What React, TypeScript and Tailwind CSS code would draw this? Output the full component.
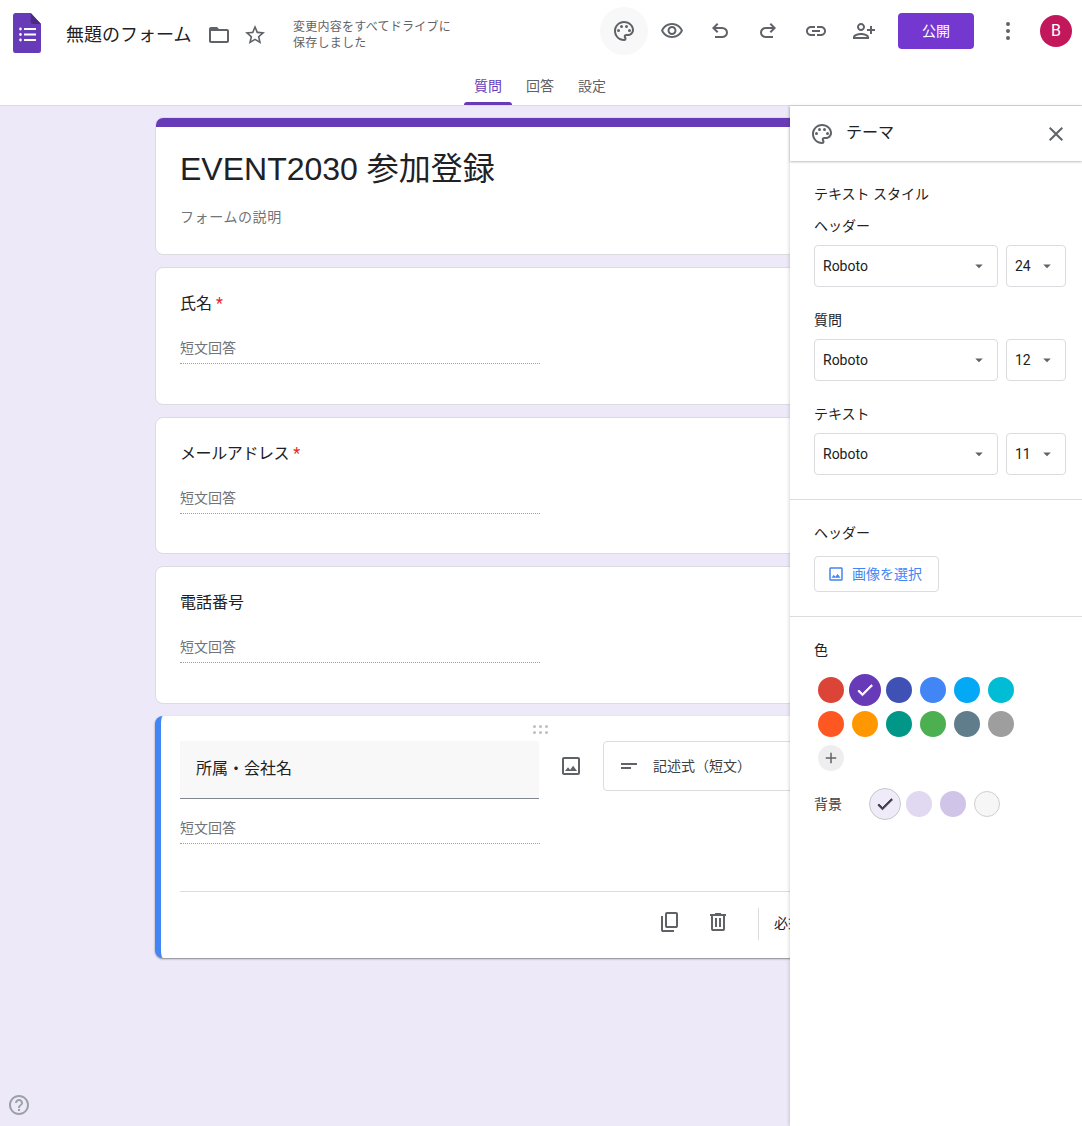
import type { ReactNode } from "react";

const PALETTE =
	"M12 22C6.49 22 2 17.51 2 12S6.49 2 12 2s10 4.04 10 9c0 3.31-2.69 6-6 6h-1.77c-.28 0-.5.22-.5.5 0 .12.05.23.13.33.41.47.64 1.06.64 1.67A2.5 2.5 0 0 1 12 22zm0-18c-4.41 0-8 3.59-8 8s3.59 8 8 8c.28 0 .5-.22.5-.5a.54.54 0 0 0-.14-.35c-.41-.46-.63-1.05-.63-1.65a2.5 2.5 0 0 1 2.5-2.5H16c2.21 0 4-1.79 4-4 0-3.86-3.59-7-8-7z";
const IMAGE =
	"M19 5v14H5V5h14m0-2H5c-1.1 0-2 .9-2 2v14c0 1.1.9 2 2 2h14c1.1 0 2-.9 2-2V5c0-1.1-.9-2-2-2zm-4.86 8.86l-3 3.87L9 13.14 6 17h12l-3.86-5.14z";

function Icon({ d, className = "", children }: { d?: string; className?: string; children?: ReactNode }) {
	return (
		<svg viewBox="0 0 24 24" className={"fill-current " + className}>
			{d && <path d={d} />}
			{children}
		</svg>
	);
}

function SymbolIcon({ d, className = "" }: { d: string; className?: string }) {
	return (
		<svg viewBox="0 -960 960 960" className={"fill-current " + className}>
			<path d={d} />
		</svg>
	);
}

function PaletteIcon({ className = "" }: { className?: string }) {
	return (
		<Icon d={PALETTE} className={className}>
			<circle cx="6.5" cy="11.5" r="1.5" />
			<circle cx="9.5" cy="7.5" r="1.5" />
			<circle cx="14.5" cy="7.5" r="1.5" />
			<circle cx="17.5" cy="11.5" r="1.5" />
		</Icon>
	);
}

function HeaderButton({ children, active }: { children: ReactNode; active?: boolean }) {
	return (
		<div className={"flex h-12 w-12 items-center justify-center rounded-full text-[#5f6368] " + (active ? "bg-[#f8f8f8]" : "")}>
			{children}
		</div>
	);
}

function Header() {
	return (
		<header className="h-[106px] shrink-0 border-b border-[#dadce0] bg-white">
			<div className="flex h-[62px] items-center pl-[13px]">
				<svg viewBox="0 0 30 40" preserveAspectRatio="none" className="mt-[4px] h-10 w-[28px] shrink-0">
					<path d="M2.5 0H19l11 11v26.500a2.500 2.500 0 0 1-2.500 2.500h-25A2.500 2.500 0 0 1 0 37.500v-35A2.500 2.500 0 0 1 2.500 0z" fill="#673ab7" />
					<path d="M19 0l11 11H21.500A2.500 2.500 0 0 1 19 8.500z" fill="#4b2a86" />
					<g fill="#fff">
						<circle cx="8" cy="16" r="1.400" />
						<circle cx="8" cy="21.500" r="1.400" />
						<circle cx="8" cy="27" r="1.400" />
						<rect x="11.800" y="15" width="12.800" height="2" />
						<rect x="11.800" y="20.500" width="12.800" height="2" />
						<rect x="11.800" y="26" width="12.800" height="2" />
					</g>
				</svg>
				<div className="ml-[25px] mt-[6px] w-[141px] whitespace-nowrap text-[18px] text-[#202124]">無題のフォーム</div>
				<Icon d="M20 6h-8l-2-2H4c-1.100 0-1.990.9-1.990 2L2 18c0 1.100.9 2 2 2h16c1.100 0 2-.9 2-2V8c0-1.100-.9-2-2-2zm0 12H4V8h16v10z" className="mt-[8px] h-[24px] w-[24px] text-[#5f6368]" />
				<Icon
					d="M22 9.240l-7.190-.62L12 2 9.190 8.630 2 9.240l5.460 4.730L5.820 21 12 17.270 18.180 21l-1.630-7.030L22 9.240zM12 15.400l-3.760 2.270 1-4.280-3.320-2.880 4.380-.38L12 6.100l1.710 4.040 4.380.38-3.320 2.880 1 4.280L12 15.400z"
					className="ml-3 mt-[8px] h-[24px] w-[24px] text-[#5f6368]"
				/>
				<div className="ml-[26px] mt-[8px] w-[170px] text-[12px] leading-4 tracking-[0.25px] text-[#5f6368]">変更内容をすべてドライブに保存しました</div>
				<div className="ml-auto flex items-center pr-[10px]">
					<HeaderButton active>
						<PaletteIcon className="h-6 w-6" />
					</HeaderButton>
					<HeaderButton>
						<Icon d="M12 6c3.790 0 7.170 2.130 8.820 5.500C19.170 14.870 15.790 17 12 17s-7.170-2.130-8.820-5.500C4.830 8.130 8.210 6 12 6m0-2C7 4 2.730 7.110 1 11.500 2.730 15.890 7 19 12 19s9.270-3.110 11-7.500C21.270 7.110 17 4 12 4zm0 5c1.380 0 2.500 1.120 2.500 2.500S13.380 14 12 14s-2.500-1.120-2.500-2.500S10.620 9 12 9m0-2c-2.480 0-4.500 2.020-4.500 4.500S9.520 16 12 16s4.500-2.020 4.500-4.500S14.480 7 12 7z" className="h-6 w-6" />
					</HeaderButton>
					<HeaderButton>
						<SymbolIcon d="M280-200v-80h284q63 0 109.500-40T720-420q0-60-46.500-100T564-560H312l104 104-56 56-200-200 200-200 56 56-104 104h252q97 0 166.500 63T800-420q0 94-69.500 157T564-200H280Z" className="h-6 w-6" />
					</HeaderButton>
					<HeaderButton>
						<SymbolIcon d="M396-200q-97 0-166.500-63T160-420q0-94 69.500-157T396-640h252L544-744l56-56 200 200-200 200-56-56 104-104H396q-63 0-109.500 40T240-420q0 60 46.500 100T396-280h284v80H396Z" className="h-6 w-6" />
					</HeaderButton>
					<HeaderButton>
						<Icon d="M3.900 12c0-1.710 1.390-3.100 3.100-3.100h4V7H7c-2.760 0-5 2.240-5 5s2.240 5 5 5h4v-1.900H7c-1.710 0-3.100-1.390-3.100-3.100zM8 13h8v-2H8v2zm9-6h-4v1.900h4c1.710 0 3.100 1.390 3.100 3.100s-1.390 3.100-3.100 3.100h-4V17h4c2.760 0 5-2.240 5-5s-2.240-5-5-5z" className="h-6 w-6" />
					</HeaderButton>
					<HeaderButton>
						<Icon d="M15 12c2.210 0 4-1.790 4-4s-1.790-4-4-4-4 1.790-4 4 1.790 4 4 4zm0-6c1.100 0 2 .9 2 2s-.9 2-2 2-2-.9-2-2 .9-2 2-2zm0 8c-2.670 0-8 1.340-8 4v2h16v-2c0-2.660-5.330-4-8-4zm-6 4c.2-.63 2.570-2 6-2 3.450 0 5.800 1.370 6 2H9zm-3-3v-3h3v-2H6V7H4v3H1v2h3v3z" className="h-6 w-6 -scale-x-100" />
					</HeaderButton>
					<div className="ml-[10px] flex h-9 w-[76px] items-center justify-center rounded bg-[#7438d0] text-[14px] text-white">公開</div>
					<div className="ml-[10px] flex h-12 w-12 items-center justify-center text-[#5f6368]">
						<Icon className="h-6 w-6">
							<circle cx="12" cy="5" r="2" />
							<circle cx="12" cy="12" r="2" />
							<circle cx="12" cy="19" r="2" />
						</Icon>
					</div>
					<div className="ml-2 flex h-8 w-8 items-center justify-center rounded-full bg-[#c2185b] text-[16px] text-white">B</div>
				</div>
			</div>
			<nav className="flex h-[43px] justify-center gap-1 pr-[2px] text-[14px] text-[#5f6368]">
				<div className="relative flex w-12 items-center justify-center pt-[5px] text-[#673ab7]">
					質問
					<div className="absolute inset-x-0 bottom-0 h-[3px] rounded-t-[3px] bg-[#673ab7]" />
				</div>
				<div className="flex w-12 items-center justify-center pt-[5px]">回答</div>
				<div className="flex w-12 items-center justify-center pt-[5px]">設定</div>
			</nav>
		</header>
	);
}

function ShortAnswer() {
	return (
		<div className="w-[360px] border-b border-dotted border-[#9aa0a6] pb-[5px] text-[14px] leading-[20px] text-[#70757a]">短文回答</div>
	);
}

function QuestionCard({ title, required, height, titleClass = "" }: { title: string; required?: boolean; height: string; titleClass?: string }) {
	return (
		<section className={"rounded-lg border border-[#dadce0] bg-white pl-6 pt-[24px] " + height}>
			<div className="text-[16px] leading-[24px] text-[#202124]">
				<span className={titleClass}>{title}</span>
				{required && <span className="ml-1 text-[#e5281e]">*</span>}
			</div>
			<div className="mt-[22px]">
				<ShortAnswer />
			</div>
		</section>
	);
}

function FormEditor() {
	return (
		<main className="min-w-0 flex-1 overflow-hidden pl-[155px] pt-[11px]">
			<div className="flex w-[770px] flex-col gap-3">
				<section className="h-[138px] overflow-hidden rounded-lg border border-[#dadce0] bg-white">
					<div className="-mx-px -mt-px h-[10px] bg-[#673ab7]" />
					<div className="pl-6 pt-[20px]">
						<h1 className="font-['Liberation_Sans','Noto_Sans_CJK_JP',sans-serif] text-[32px] leading-[44px] text-[#202124]">EVENT2030 参加登録</h1>
						<div className="mt-[16px] text-[14px] leading-[20px] tracking-[0.6px] text-[#70757a]">フォームの説明</div>
					</div>
				</section>
				<QuestionCard title="氏名" required height="h-[138px]" />
				<QuestionCard title="メールアドレス" required height="h-[137px]" titleClass="tracking-[-0.4px]" />
				<QuestionCard title="電話番号" height="h-[138px]" />
				<section className="relative h-[242px] overflow-hidden rounded-lg border-l-[6px] border-[#4285f4] bg-white shadow-[0_1px_2px_rgba(60,64,67,0.6)]">
					<div className="absolute left-[372px] top-[9px] grid grid-cols-3 gap-x-[3px] gap-y-[3px]">
						{[0, 1, 2, 3, 4, 5].map((i) => (
							<div key={i} className="h-[3px] w-[3px] rounded-full bg-[#bdc1c6]" />
						))}
					</div>
					<div className="flex items-start pl-[19px] pt-[25px]">
						<div className="flex h-[58px] w-[359px] items-center border-b border-[#80868b] bg-[#f8f8f8] pb-[2px] pl-4 text-[16px] text-[#202124]">所属・会社名</div>
						<div className="flex h-[50px] w-16 items-center justify-center text-[#5f6368]">
							<Icon d={IMAGE} className="h-6 w-6" />
						</div>
						<div className="flex h-[50px] w-[300px] items-center rounded border border-[#dadce0] pl-[13px] text-[14px] text-[#3c4043]">
							<Icon d="M4 9h16v2H4V9zm0 4h10v2H4v-2z" className="h-6 w-6 text-[#5f6368]" />
							<span className="ml-[12px]">記述式（短文）</span>
						</div>
					</div>
					<div className="ml-[19px] mt-[19px]">
						<ShortAnswer />
					</div>
					<div className="ml-[19px] mt-[47px] flex h-[64px] items-center border-t border-[#dadce0] pl-[478px] text-[#5f6368]">
						<SymbolIcon d="M360-240q-33 0-56.500-23.500T280-320v-480q0-33 23.500-56.500T360-880h360q33 0 56.500 23.500T800-800v480q0 33-23.500 56.500T720-240H360Zm0-80h360v-480H360v480ZM200-80q-33 0-56.500-23.500T120-160v-560h80v560h440v80H200Z" className="mb-[4px] h-6 w-6" />
						<SymbolIcon d="M280-120q-33 0-56.500-23.500T200-200v-520h-40v-80h200v-40h240v40h200v80h-40v520q0 33-23.500 56.500T680-120H280Zm400-600H280v520h400v-520ZM360-280h80v-360h-80v360Zm160 0h80v-360h-80v360ZM280-720v520-520Z" className="mb-[4px] ml-6 h-6 w-6" />
						<div className="ml-[28px] h-8 w-px bg-[#dadce0]" />
						<span className="ml-[15px] whitespace-nowrap text-[14px] text-[#202124]">必須</span>
					</div>
				</section>
			</div>
		</main>
	);
}

function Dropdown({ value, className }: { value: string; className: string }) {
	return (
		<div className={"flex h-[42px] shrink-0 items-center rounded border border-[#dadce0] pl-2 text-[14px] text-[#202124] " + className}>
			{value}
			<Icon d="M7 10l5 5 5-5z" className="ml-auto mr-[9px] h-[18px] w-[18px] text-[#5f6368]" />
		</div>
	);
}

function FontRow({ label, size }: { label: string; size: string }) {
	return (
		<div>
			<div className="text-[14px] leading-[20px] text-[#202124]">{label}</div>
			<div className="mt-[9px] flex gap-2">
				<Dropdown value="Roboto" className="w-[184px]" />
				<Dropdown value={size} className="w-[60px]" />
			</div>
		</div>
	);
}

const themeColors = ["#db4437", "#673ab7", "#3f51b5", "#4285f4", "#03a9f4", "#00bcd4", "#ff5722", "#ff9800", "#009688", "#4caf50", "#607d8b", "#9e9e9e"];

function CheckMark({ className }: { className: string }) {
	return <Icon d="M9 16.170L4.830 12l-1.420 1.410L9 19 21 7l-1.410-1.410z" className={"stroke-current stroke-[1] " + className} />;
}

function ThemePanel() {
	return (
		<aside className="z-10 flex w-[292px] shrink-0 flex-col bg-white shadow-[-1px_0_3px_rgba(60,64,67,0.2)]">
			<div className="flex h-[55px] shrink-0 items-center pl-5 pr-[14px] shadow-[0_1px_2px_rgba(60,64,67,0.35)]">
				<PaletteIcon className="h-6 w-6 text-[#5f6368]" />
				<span className="ml-3 -mt-[2px] text-[16px] text-[#202124]">テーマ</span>
				<Icon d="M19 6.410L17.590 5 12 10.590 6.410 5 5 6.410 10.590 12 5 17.590 6.410 19 12 13.410 17.590 19 19 17.590 13.410 12z" className="ml-auto h-6 w-6 text-[#5f6368]" />
			</div>
			<div className="border-b border-[#dadce0] pb-6 pl-6 pr-4 pt-[23px]">
				<div className="text-[14px] leading-[20px] text-[#202124]">テキスト スタイル</div>
				<div className="mt-[12px] flex flex-col gap-[23px]">
					<FontRow label="ヘッダー" size="24" />
					<FontRow label="質問" size="12" />
					<FontRow label="テキスト" size="11" />
				</div>
			</div>
			<div className="border-b border-[#dadce0] px-6 pb-6 pt-[23px]">
				<div className="text-[14px] leading-[20px] text-[#202124]">ヘッダー</div>
				<div className="mt-[13px] flex h-9 w-[125px] items-center rounded border border-[#dadce0] pl-[12px] text-[14px] text-[#4285f4]">
					<Icon d={IMAGE} className="h-[18px] w-[18px]" />
					<span className="ml-[7px]">画像を選択</span>
				</div>
			</div>
			<div className="px-6 pt-[23px]">
				<div className="text-[14px] leading-[20px] text-[#202124]">色</div>
				<div className="mt-[13px] grid w-[204px] grid-cols-6">
					{themeColors.map((color, i) => (
						<div key={color} className="flex h-[34px] w-[34px] items-center justify-center">
							<div
								className={"flex items-center justify-center rounded-full " + (i === 1 ? "h-8 w-8" : "h-[26px] w-[26px]")}
								style={{ backgroundColor: color }}
							>
								{i === 1 && <CheckMark className="h-5 w-5 text-white" />}
							</div>
						</div>
					))}
					<div className="flex h-[34px] w-[34px] items-center justify-center">
						<div className="flex h-[26px] w-[26px] items-center justify-center rounded-full bg-[#eeeeee] text-[#5f6368]">
							<Icon d="M19 13h-6v6h-2v-6H5v-2h6V5h2v6h6v2z" className="h-[18px] w-[18px]" />
						</div>
					</div>
				</div>
				<div className="mt-3 flex items-center">
					<div className="w-[54px] text-[14px] text-[#3c4043]">背景</div>
					<div className="flex h-[34px] w-[34px] items-center justify-center">
						<div className="flex h-8 w-8 items-center justify-center rounded-full border border-[#c8c8cc] bg-[#f0ebf8]">
							<CheckMark className="h-5 w-5 text-[#3c3c44]" />
						</div>
					</div>
					<div className="flex h-[34px] w-[34px] items-center justify-center">
						<div className="h-[26px] w-[26px] rounded-full bg-[#e1d8f1]" />
					</div>
					<div className="flex h-[34px] w-[34px] items-center justify-center">
						<div className="h-[26px] w-[26px] rounded-full bg-[#d1c4e9]" />
					</div>
					<div className="flex h-[34px] w-[34px] items-center justify-center">
						<div className="h-[26px] w-[26px] rounded-full border border-[#cfcfcf] bg-[#f6f6f6]" />
					</div>
				</div>
			</div>
		</aside>
	);
}

export default function App() {
	return (
		<div className="relative flex h-screen flex-col overflow-hidden bg-[#ede9f8] font-['Roboto','Noto_Sans_CJK_JP',sans-serif]">
			<Header />
			<div className="flex min-h-0 flex-1">
				<FormEditor />
				<ThemePanel />
			</div>
			<Icon
				d="M11 18h2v-2h-2v2zm1-16C6.480 2 2 6.480 2 12s4.480 10 10 10 10-4.480 10-10S17.520 2 12 2zm0 18c-4.410 0-8-3.590-8-8s3.590-8 8-8 8 3.590 8 8-3.590 8-8 8zm0-14c-2.210 0-4 1.790-4 4h2c0-1.100.9-2 2-2s2 .9 2 2c0 2-3 1.750-3 5h2c0-2.250 3-2.500 3-5 0-2.210-1.790-4-4-4z"
				className="absolute bottom-[9px] left-[7px] h-6 w-6 text-[#9aa0a6]"
			/>
		</div>
	);
}
